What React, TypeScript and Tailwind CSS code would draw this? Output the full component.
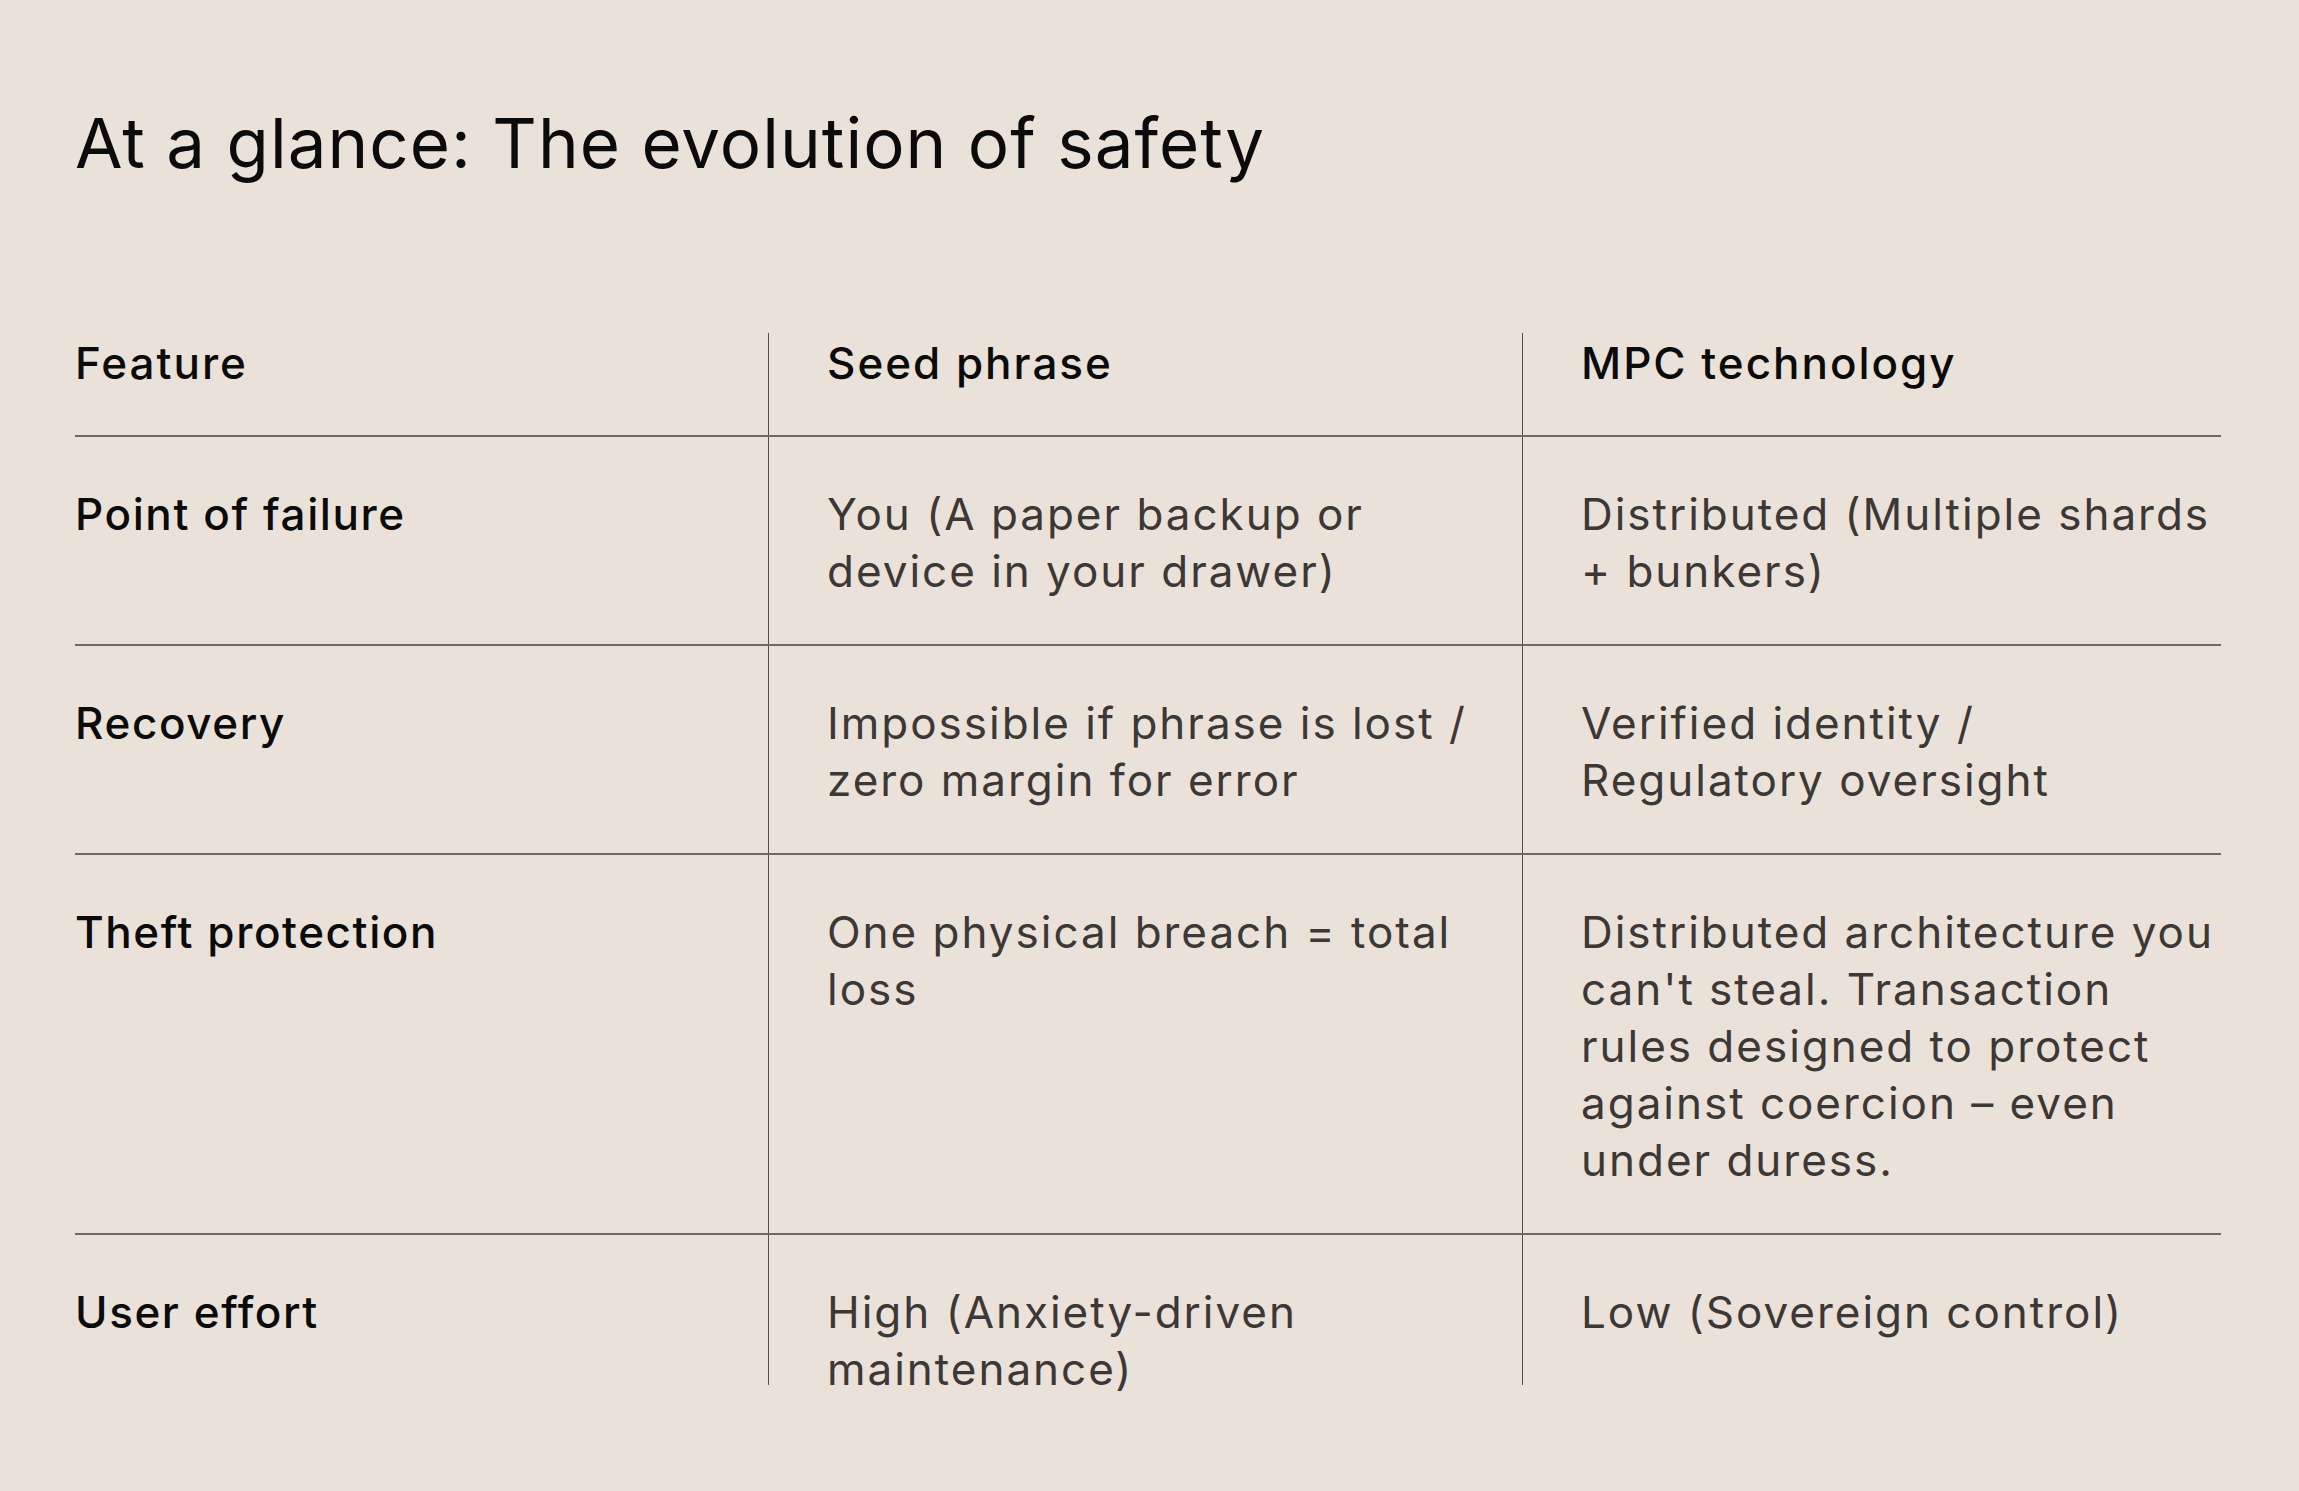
import React from "react";

const rows: { label: string; seed: string[]; mpc: string[] }[] = [
  {
    label: "Point of failure",
    seed: ["You (A paper backup or", "device in your drawer)"],
    mpc: ["Distributed (Multiple shards", "+ bunkers)"],
  },
  {
    label: "Recovery",
    seed: ["Impossible if phrase is lost /", "zero margin for error"],
    mpc: ["Verified identity /", "Regulatory oversight"],
  },
  {
    label: "Theft protection",
    seed: ["One physical breach = total", "loss"],
    mpc: [
      "Distributed architecture you",
      "can't steal. Transaction",
      "rules designed to protect",
      "against coercion – even",
      "under duress.",
    ],
  },
  {
    label: "User effort",
    seed: ["High (Anxiety-driven", "maintenance)"],
    mpc: ["Low (Sovereign control)"],
  },
];

function Lines({ lines }: { lines: string[] }) {
  return (
    <>
      {lines.map((l, i) => (
        <React.Fragment key={i}>
          {l}
          {i < lines.length - 1 && <br />}
        </React.Fragment>
      ))}
    </>
  );
}

export default function App() {
  return (
    <div
      className="min-h-screen w-full bg-[#eae1d9] pl-[75px]"
      style={{ fontFamily: "Inter, 'Noto Sans', Arial, sans-serif" }}
    >
      <h1 className="pt-[109px] text-[69px] leading-none font-normal text-[#0b0b0b] tracking-[0.015em]">
        At a glance: The evolution of safety
      </h1>

      <div className="mt-[155px] w-[2146px] text-[44px] leading-[57px] tracking-[0.045em]">
        {/* header */}
        <div className="grid grid-cols-[693px_754px_699px] border-b-2 border-[#6f6964]">
          <div className="pt-[2px] pb-[43px] font-medium text-[#0b0b0b] whitespace-nowrap">Feature</div>
          <div className="border-l border-[#55504c] pl-[58px] pt-[2px] pb-[43px] font-medium text-[#0b0b0b] whitespace-nowrap">
            Seed phrase
          </div>
          <div className="border-l border-[#55504c] pl-[58px] pt-[2px] pb-[43px] font-medium text-[#0b0b0b] whitespace-nowrap">
            MPC technology
          </div>
        </div>

        {rows.map((r, i) => {
          const last = i === rows.length - 1;
          const rowCls = last
            ? "grid grid-cols-[693px_754px_699px]"
            : "grid grid-cols-[693px_754px_699px] border-b-2 border-[#6f6964]";
          const pad = last ? "pt-[49px] h-[150px]" : "pt-[49px] pb-[44px]";
          return (
            <div key={r.label} className={rowCls}>
              <div className={`${pad} font-medium text-[#0b0b0b] whitespace-nowrap tracking-[0.036em]`}>{r.label}</div>
              <div className={`${pad} border-l border-[#55504c] pl-[58px] text-[#3b3835] whitespace-nowrap`}>
                <Lines lines={r.seed} />
              </div>
              <div className={`${pad} border-l border-[#55504c] pl-[58px] text-[#3b3835] whitespace-nowrap`}>
                <Lines lines={r.mpc} />
              </div>
            </div>
          );
        })}
      </div>
    </div>
  );
}
